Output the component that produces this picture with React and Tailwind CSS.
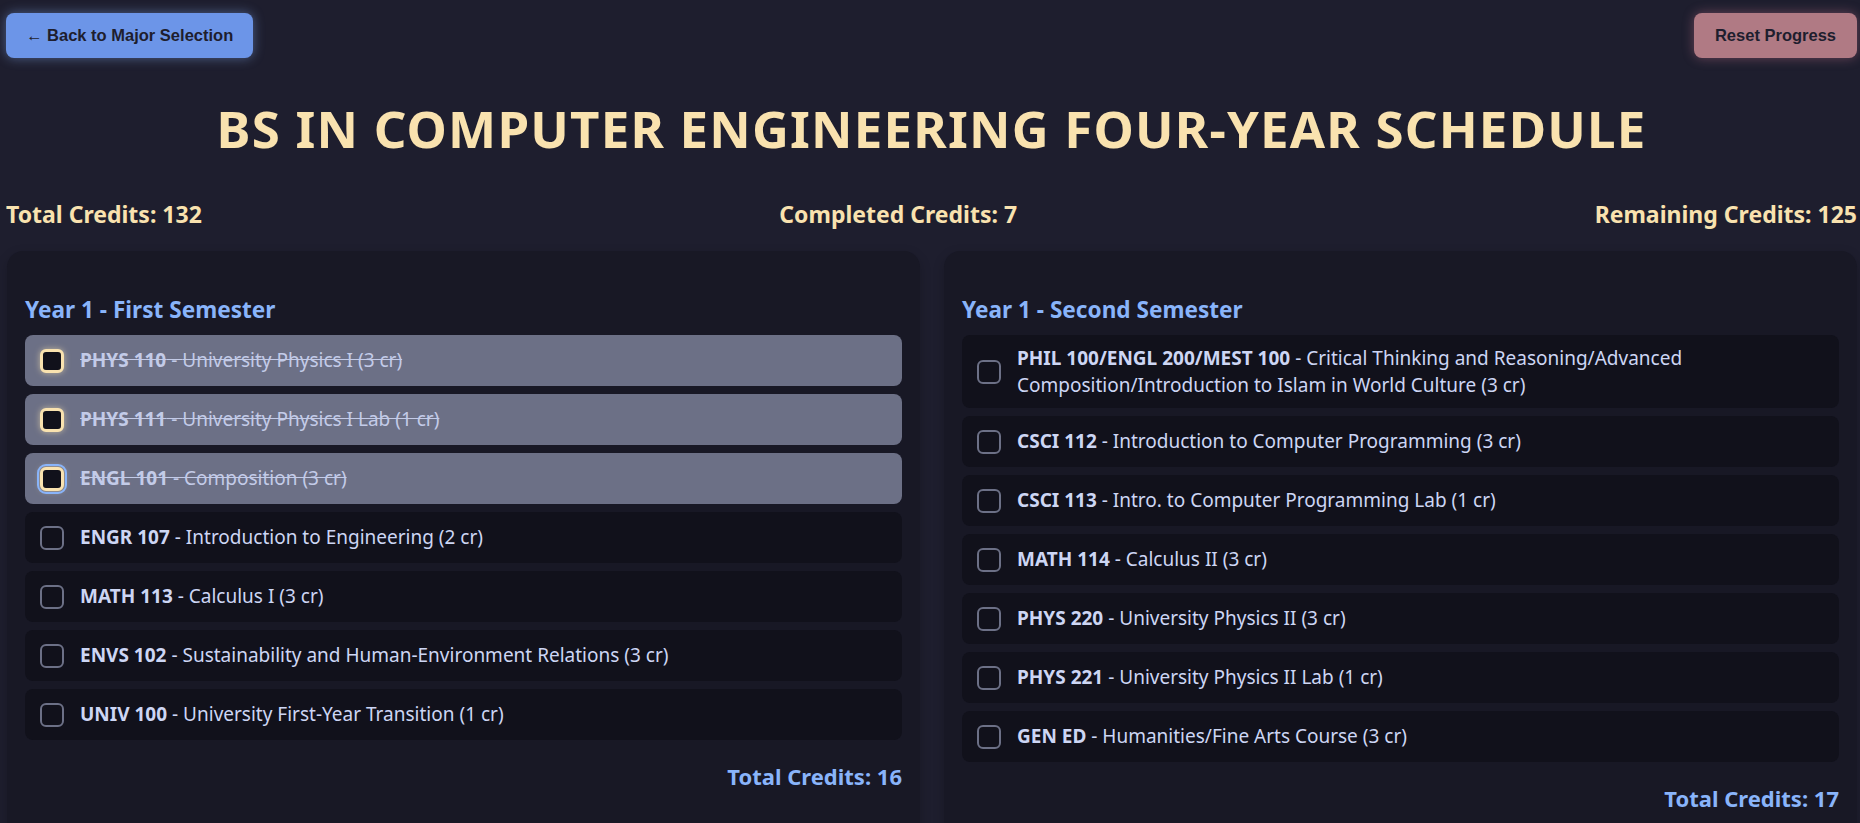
import React from "react";

const left = [
  { code: "PHYS 110", name: "University Physics I (3 cr)", done: true },
  { code: "PHYS 111", name: "University Physics I Lab (1 cr)", done: true },
  { code: "ENGL 101", name: "Composition (3 cr)", done: true, focus: true },
  { code: "ENGR 107", name: "Introduction to Engineering (2 cr)" },
  { code: "MATH 113", name: "Calculus I (3 cr)" },
  { code: "ENVS 102", name: "Sustainability and Human-Environment Relations (3 cr)" },
  { code: "UNIV 100", name: "University First-Year Transition (1 cr)" },
];

const right = [
  {
    code: "PHIL 100/ENGL 200/MEST 100",
    name: "Critical Thinking and Reasoning/Advanced Composition/Introduction to Islam in World Culture (3 cr)",
  },
  { code: "CSCI 112", name: "Introduction to Computer Programming (3 cr)" },
  { code: "CSCI 113", name: "Intro. to Computer Programming Lab (1 cr)" },
  { code: "MATH 114", name: "Calculus II (3 cr)" },
  { code: "PHYS 220", name: "University Physics II (3 cr)" },
  { code: "PHYS 221", name: "University Physics II Lab (1 cr)" },
  { code: "GEN ED", name: "Humanities/Fine Arts Course (3 cr)" },
];

function Row({ c }) {
  return (
    <div
      className={
        "flex items-center min-h-[51px] rounded-[8px] pl-[15px] pr-[15px] py-[10px] " +
        (c.done ? "bg-[#6c7086]" : "bg-[#11111b]")
      }
    >
      <span
        className={
          "shrink-0 w-[24px] h-[24px] rounded-[6px] bg-[#11111b] mr-[16px] " +
          (c.done
            ? "border-[3px] border-[#f9e2af] shadow-[0_0_6px_rgba(249,226,175,0.6)] "
            : "border-2 border-[#6c7086] ") +
          (c.focus ? "outline-2 outline-[#89b4fa] outline-offset-[1px]" : "")
        }
      />
      <span
        className={
          "text-[19px] leading-[26.5px] " +
          (c.done ? "line-through text-[#c3cbe8]" : "text-[#cdd6f4]")
        }
      >
        <span className="font-bold">{c.code}</span> - {c.name}
      </span>
    </div>
  );
}

function Card({ title, courses, total }) {
  return (
    <div className="bg-[#181825] rounded-[16px] px-[18px] pt-[44px] pb-[40px] shadow-[0_4px_12px_rgba(0,0,0,0.2)]">
      <h2 className="text-[22.6px] leading-[30px] font-bold text-[#89b4fa] mb-[10px]">{title}</h2>
      <div className="flex flex-col gap-[8px]">
        {courses.map((c) => (
          <Row key={c.code} c={c} />
        ))}
      </div>
      <div className="text-right text-[22px] font-bold text-[#89b4fa] mt-[20px]">
        Total Credits: {total}
      </div>
    </div>
  );
}

export default function App() {
  return (
    <div
      className="min-h-screen bg-[#1e1e2e] pl-[6px] pr-[3px] pt-[13px]"
      style={{ fontFamily: '"Noto Sans", "Open Sans", sans-serif' }}
    >
      <div className="flex justify-between" style={{ fontFamily: '"Liberation Sans", Arial, sans-serif' }}>
        <button className="h-[45px] px-[20px] rounded-[8px] bg-[#6c95e8] text-[#1e1e2e] font-bold text-[16.5px] shadow-[0_0_12px_rgba(137,180,250,0.45)]">
          ← Back to Major Selection
        </button>
        <button className="h-[45px] px-[21px] rounded-[8px] bg-[#b07a84] text-[#1e1e2e] font-bold text-[16.5px] shadow-[0_0_12px_rgba(243,139,168,0.35)]">
          Reset Progress
        </button>
      </div>
      <h1 className="text-center text-[#f9e2af] font-bold text-[51px] tracking-[1.2px] leading-[60px] mt-[40px] mb-[42px]">
        BS IN COMPUTER ENGINEERING FOUR-YEAR SCHEDULE
      </h1>
      <div className="flex justify-between text-[23px] font-bold text-[#f9e2af] leading-[28px]">
        <span>Total Credits: 132</span>
        <span>Completed Credits: 7</span>
        <span>Remaining Credits: 125</span>
      </div>
      <div className="grid grid-cols-2 gap-[24px] mt-[23px] pl-[1px]">
        <Card title="Year 1 - First Semester" courses={left} total={16} />
        <Card title="Year 1 - Second Semester" courses={right} total={17} />
      </div>
    </div>
  );
}
